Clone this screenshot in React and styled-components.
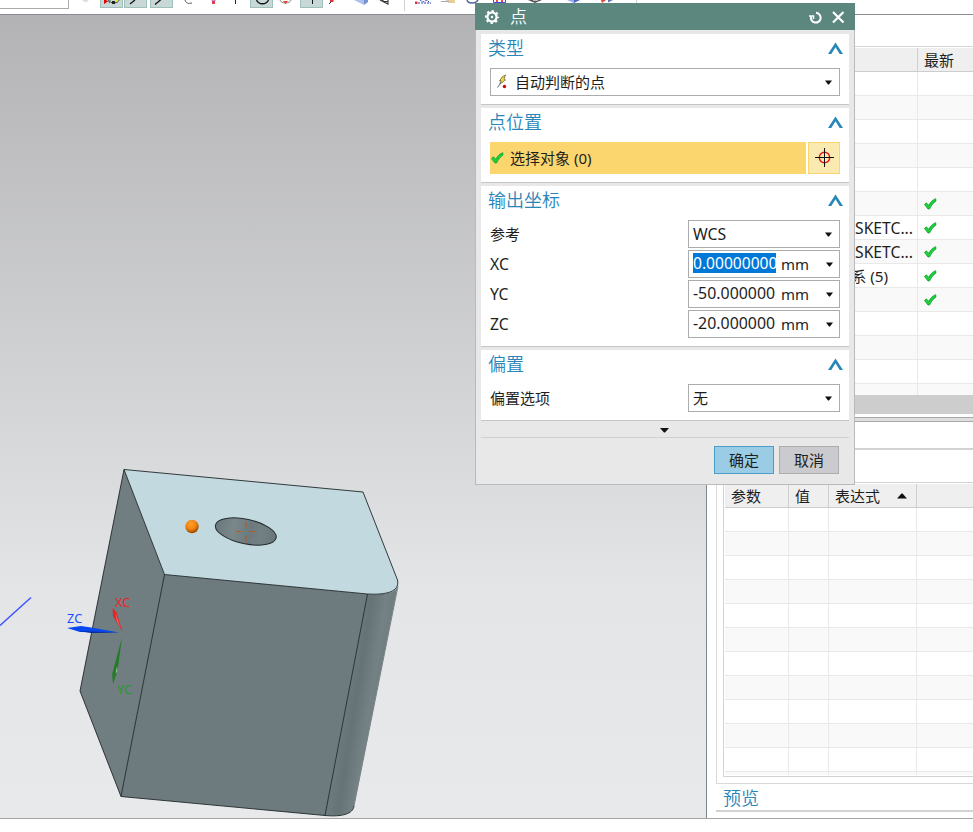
import React from 'react';
import styled, { createGlobalStyle } from 'styled-components';

const GlobalStyle = createGlobalStyle`
  * { box-sizing: border-box; }
  body { margin: 0; background: #fff; overflow: hidden; }
`;

const Window = styled.div`
  position: relative;
  display: flex;
  flex-direction: column;
  width: 973px;
  height: 832px;
  overflow: hidden;
  background: #fff;
  color: #1e1e1e;
  font: 15px/20px 'Noto Sans', 'Noto Sans CJK SC', sans-serif;
`;

/* Toolbar */
const Toolbar = styled.div`
  display: flex;
  align-items: flex-start;
  height: 15px;
  flex: none;
  border-bottom: 1px solid #868c90;
`;
const FilterBox = styled.div`
  width: 69px;
  height: 9px;
  margin-right: 6px;
  border: solid #acacac;
  border-width: 0 1px 1px 0;
`;
const Tool = styled.div`
  width: 23px;
  height: 8px;
  margin-right: ${(p) => p.$gap ?? 2}px;
  background: ${(p) => (p.$active ? '#c8d8d7' : 'transparent')};
  border: ${(p) => (p.$active ? '1px solid #9fbfba' : '1px solid transparent')};
  border-top: 0;
  overflow: hidden;
  svg { display: block; }
`;
const ToolDivider = styled.div`
  width: 1px;
  height: 11px;
  margin: 0 9px 0 3px;
  background: #d2d2d2;
`;

const toolIcons = [
  { d: <path d="M6 0h7l-3 2.500-2-1z" fill="#ddd" /> },
  { active: true, gap: 1, d: <><path d="M3 0v4l4-2.500-2-1.500z" fill="#e60000" /><path d="M7 0l2 3M9 0c-1 4 8 4 9 0" fill="none" stroke="#444" /><path d="M11 1h3v3h-3z" fill="#222" /><path d="M15 0h1.500v1.500H15z" fill="#ee0" /></> },
  { active: true, gap: 3, d: <path d="M5 4l5-4" stroke="#111" strokeWidth="1.300" /> },
  { active: true, d: <path d="M4 4.500l6-5" stroke="#111" strokeWidth="1.300" /> },
  { d: <path d="M9 0c1 3 3 4 7 3" fill="none" stroke="#555" /> },
  { d: <><path d="M10 0h5l-2 3z" fill="#c58bdd" /><path d="M11 1h3v3h-3z" fill="#d8404e" /></> },
  { d: <path d="M9.500 0v4" stroke="#222" /> },
  { active: true, d: <path d="M5.500 0c2 5 10 5 12 0" fill="none" stroke="#111" strokeWidth="1.300" /> },
  { d: <><path d="M4 0c1 4 10 4 11 0" fill="none" stroke="#888" /><path d="M7 1h5l-2.500 3z" fill="#e34234" /></> },
  { active: true, gap: 4, d: <path d="M11.500 0v4" stroke="#111" /> },
  { d: <><path d="M1 4l4-4" stroke="#333" /><path d="M2 0h3.500v2H2z" fill="#d33" /></> },
  { gap: 2, d: <><path d="M1 0l10 5V0z" fill="#a9c1ec" /><path d="M11 0v5l4-3V0z" fill="#7392cf" /></> },
  { gap: 1, d: <path d="M2 0l8 4V0M5 0v1.500h5" fill="none" stroke="#333" strokeWidth="1.100" /> },
];
const rightIcons = [
  { gap: 2, d: <><path d="M3 3h13M5 0l3 2 4-2 3 3" stroke="#3143a5" strokeDasharray="2 1" fill="none" /><path d="M0 1.500h2.500V4H0z" fill="#e03232" /></> },
  { gap: 2, d: <><path d="M5 0h10v3H9z" fill="#e6cf95" /><path d="M1 1h8v1H1z" fill="#9ca9c9" /></> },
  { gap: 2, d: <path d="M2 0c1 4 9 4 11 0" fill="none" stroke="#53659c" strokeWidth="1.500" /> },
  { gap: 12, d: <><path d="M3.500 0v2.500h12V0" fill="none" stroke="#4545e8" /><path d="M6 0h2v2H6zM11 0h2v2h-2z" fill="#f04b3a" /></> },
  { gap: 16, d: <><path d="M3 0h14l-7 3z" fill="#555" /><path d="M8 0h5v1H8z" fill="#bbb" /></> },
  { gap: 12, d: <><path d="M3 0l7 3V0z" fill="#99aaf0" /><path d="M10 0v3l6-3z" fill="#5167bd" /></> },
  { gap: 12, d: <><path d="M2 0h5L3 3z" fill="#e04734" /><path d="M9 0h5L9 2.500z" fill="#6272b1" /></> },
];

const renderTool = ({ active, gap, d }, i) => (
  <Tool key={i} $active={active} $gap={gap}>
    <svg width="21" height="7">{d}</svg>
  </Tool>
);

/* Main area */
const Workspace = styled.div`
  display: flex;
  height: 804px;
  flex: none;
  border-bottom: 1px solid #a4a4a4;
`;
const Viewport = styled.div`
  width: 706px;
  flex: none;
  background: linear-gradient(#b3b3b5 0%, #d9dadc 56%, #e4e5e7 72%, #e8e9eb 100%);
  svg { display: block; }
`;
const SidePanel = styled.div`
  flex: 1;
  display: flex;
  flex-direction: column;
  border-left: 1px solid #7f878c;
  background: #fff;
`;
const UpperGrid = styled.div`
  margin-top: 31px;
  height: 349px;
  padding-top: 1px;
  border-top: 1px solid #d4d4d4;
  overflow: hidden;
`;
const GridHead = styled.div`
  display: grid;
  grid-template-columns: ${(p) => p.$cols};
  height: 24px;
  background: #efefef;
  border-bottom: 1px solid #cdcdcd;
`;
const GridRow = styled.div`
  display: grid;
  grid-template-columns: ${(p) => p.$cols};
  height: 24px;
  background: ${(p) => (p.$alt ? '#f9f9f9' : '#fff')};
  border-bottom: 1px solid #e9e9e9;
`;
const Cell = styled.div`
  display: flex;
  align-items: center;
  min-width: 0;
  white-space: nowrap;
  padding-left: 6px;
  border-right: 1px solid ${(p) => (p.$head ? '#cfcfcf' : '#e9e9e9')};
  &:last-child { border-right: 0; }
`;
const NameCell = styled(Cell)`
  justify-content: ${(p) => (p.$short ? 'flex-start' : 'flex-end')};
  padding-left: ${(p) => (p.$short ? 144 : 0)}px;
  padding-right: 4px;
  font-size: ${(p) => (p.$short ? 15.3 : 15.7)}px;
`;
const HScroll = styled.div`
  height: 19px;
  background: #cdcdcd;
`;
const Splitter = styled.div`
  height: 5px;
  margin-top: 3px;
  background: #dedede;
  border: solid #a7a7a7;
  border-width: 1px 0;
`;
const TabStrip = styled.div`
  height: 28px;
  border-bottom: 2px solid #d2d2d2;
`;
const DetailFrame = styled.div`
  height: 334px;
  margin-left: 9px;
  padding: 32px 0 6px 6px;
  border: solid #d9d9d9;
  border-width: 0 0 1px 1px;
`;
const DetailGrid = styled.div`
  height: 295px;
  padding: 1px 0 1px 1px;
  border: 1px solid #d2d2d2;
  border-right: 0;
  overflow: hidden;
`;
const GridClip = styled.div`
  height: 291px;
  overflow: hidden;
`;
const PreviewTitle = styled.div`
  height: 28px;
  margin-left: 9px;
  padding-left: 7px;
  font-size: 18px;
  font-weight: 350;
  line-height: 29px;
  color: #2886b9;
  border-bottom: 2px solid #d2d2d2;
`;
const SortArrow = styled.svg`
  margin-left: 17px;
`;

/* Dialog */
const Dialog = styled.div`
  position: absolute;
  left: 475px;
  top: 3px;
  width: 380px;
  height: 482px;
  display: flex;
  flex-direction: column;
  background: #e8e8e8;
`;
const TitleBar = styled.div`
  height: 27px;
  flex: none;
  display: flex;
  align-items: center;
  padding: 1px 10px 0 9px;
  color: #fff;
  background: #5b877f;
  font-size: 17px;
  font-weight: 350;
`;
const TitleText = styled.span`
  flex: 1;
  margin-left: 10px;
  line-height: 26px;
`;
const CloseIcon = styled.svg`
  margin: 1px 0 0 10px;
`;
const DialogBody = styled.div`
  flex: 1;
  display: flex;
  flex-direction: column;
  gap: 3px;
  padding: 4px 5px 0;
  border: 1px solid #b8babb;
  border-top: 0;
`;
const SectionBox = styled.section`
  padding: 0 9px 8px;
  background: #fff;
  border-bottom: 1px solid #c6c6c6;
`;
const SectionHead = styled.div`
  display: flex;
  align-items: center;
  justify-content: space-between;
  height: 28px;
  margin: 0 -4px 6px -2px;
  font-size: 18px;
  font-weight: 350;
  color: #2886b9;
`;
const Fields = styled.div`
  display: flex;
  flex-direction: column;
  gap: 2px;
`;
const Field = styled.div`
  display: flex;
  align-items: center;
  justify-content: space-between;
  height: 28px;
`;
const AxisLabel = styled.span`
  font-size: 15.7px;
`;
const Combo = styled.div`
  display: flex;
  align-items: center;
  width: ${(p) => p.$width ?? 152}px;
  height: 28px;
  padding: 0 ${(p) => (p.$numeric ? 5 : 6)}px 0 4px;
  border: 1px solid #acacac;
  background: #fff;
`;
const ComboText = styled.span`
  flex: 1;
  font-size: ${(p) => p.$size ?? 15}px;
`;
const TypeText = styled(ComboText)`
  margin-left: 6px;
`;
const NumberText = styled.span`
  width: 83px;
  height: 20px;
  margin-top: -2px;
  white-space: nowrap;
  font-size: ${(p) => (p.$selected ? 15.6 : 15.9)}px;
  color: ${(p) => (p.$selected ? '#fff' : '#1e1e1e')};
  background: ${(p) => (p.$selected ? '#0078d7' : 'transparent')};
`;
const Unit = styled.span`
  flex: 1;
  margin-left: 5px;
`;
const SelectionRow = styled.div`
  display: flex;
  gap: 2px;
  height: 32px;
`;
const SelectionBar = styled.div`
  flex: 1;
  display: flex;
  align-items: center;
  gap: 6px;
  padding-left: 1px;
  background: #fbd56d;
`;
const PointButton = styled.button`
  display: flex;
  align-items: center;
  justify-content: center;
  width: 32px;
  padding: 0;
  border: 1px solid #fbd56d;
  background: #faeab0;
`;
const Expander = styled.div`
  display: flex;
  justify-content: center;
  align-items: center;
  height: 14px;
  padding: 0 2px 0 0;
  border-bottom: 1px solid #d0d0d0;
`;
const Actions = styled.div`
  display: flex;
  justify-content: flex-end;
  gap: 5px;
  padding: 5px 10px 0 0;
`;
const ActionButton = styled.button`
  width: 60px;
  height: 28px;
  padding: 0;
  font: inherit;
  color: #1e1e1e;
  border: 1px solid ${(p) => (p.$primary ? '#489fcd' : '#acacac')};
  background: ${(p) => (p.$primary ? '#9acce5' : '#cbcbcf')};
`;

const Triangle = ({ small }) => (
  <svg width="9" height="5">
    <path d={small ? 'M1 .5h7L5 4.500H4z' : 'M0 0h9L5 4.500H4z'} fill="#111" />
  </svg>
);
const Chevron = () => (
  <svg width="16" height="12"><path d="M0 12L7.500 .5 15 12h-3.300L7.500 5.200 3.300 12z" fill="#2886b9" /></svg>
);
const Check = () => (
  <svg width="13" height="12">
    <path d="M.5 6.500L2.300 4.800 4.800 7.300C6.500 4 8.500 2 11.700.7L12 3C9.500 4.500 7.300 7.500 5.500 11H4z" fill="#1bd23c" stroke="#119d28" strokeWidth=".8" />
  </svg>
);
const Gear = () => (
  <svg width="16" height="16" viewBox="-8 -8 16 16" fill="none" stroke="#fff">
    <circle r="4.600" strokeWidth="2.200" />
    <circle r="6.100" strokeWidth="2" strokeDasharray="2.200 2.591" strokeDashoffset="1.100" />
    <circle r="1.200" fill="#fff" stroke="none" />
  </svg>
);
const Section = ({ title, children }) => (
  <SectionBox>
    <SectionHead>{title}<Chevron /></SectionHead>
    <Fields>{children}</Fields>
  </SectionBox>
);
const NumberField = ({ label, value, selected }) => (
  <Field>
    <AxisLabel>{label}</AxisLabel>
    <Combo $numeric>
      <NumberText $selected={selected}>{value}</NumberText>
      <Unit>mm</Unit>
      <Triangle small />
    </Combo>
  </Field>
);

const Model = () => (
  <svg width="706" height="803" viewBox="0 15 706 803" fontFamily="'Noto Sans', sans-serif">
    <defs>
      <linearGradient id="fillet" gradientUnits="userSpaceOnUse" x1="346" y1="700" x2="378" y2="705">
        <stop offset="0" stopColor="#6d7a7d" />
        <stop offset=".3" stopColor="#667376" />
        <stop offset=".75" stopColor="#748185" />
        <stop offset="1" stopColor="#6f7c80" />
      </linearGradient>
      <linearGradient id="bore">
        <stop offset="0" stopColor="#6b787b" />
        <stop offset=".3" stopColor="#7a878b" />
        <stop offset=".55" stopColor="#6c797d" />
        <stop offset=".75" stopColor="#727f83" />
        <stop offset="1" stopColor="#69767a" />
      </linearGradient>
      <radialGradient id="ball" cx=".42" cy=".32" r=".65">
        <stop offset="0" stopColor="#ffa22b" />
        <stop offset=".6" stopColor="#f0820f" />
        <stop offset="1" stopColor="#a04c02" />
      </radialGradient>
    </defs>
    <path d="M0 625.500L31 597.500" stroke="#3c55ff" strokeWidth="1.500" />
    <path d="M124 469.500L164.500 574.500 121 796.500 80 691z" fill="#707e81" />
    <path d="M164.500 574.500L367.500 594 325 815.500 121 796.500z" fill="#6e7b7e" />
    <path d="M367.500 594C384 595 397 593 398 585L354 806C353 814 342 817 325 815.500z" fill="url(#fillet)" />
    <path d="M124 469.500L363 492 397.500 580C400 592 386 595 367.500 594L164.500 574.500z" fill="#c2d9df" />
    <path d="M124 469.500L363 492 397.500 580C400 592 386 595 367.500 594L164.500 574.500zM124 469.500L80 691 121 796.500 325 815.500C342 817 353 814 354 806M164.500 574.500L121 796.500M367.500 594L325 815.500" fill="none" stroke="#1f2729" strokeWidth=".9" />
    <path d="M398 586L354 806" stroke="#788487" />
    <ellipse cx="245.800" cy="531.500" rx="31" ry="12.300" transform="rotate(12 245.800 531.500)" fill="url(#bore)" stroke="#252d2f" />
    <path d="M246 522.500v5M246 536v5M236 531.500h5M250 531.500h5" stroke="#b35d1c" strokeWidth="1.200" />
    <circle cx="192" cy="526.500" r="6.700" fill="url(#ball)" />
    <path d="M67 628l14-2 10 1.500 28 5-39-.5z" fill="#0647ef" />
    <path d="M78 631l41 1.500-28 .5z" fill="#082a95" />
    <path d="M112.500 608l4 4 6 20-9.500-16z" fill="#df2528" />
    <path d="M115 612l6 17-4-8z" fill="#f07977" />
    <path d="M122 637.500L117.500 671l-4.500 13-.8-10z" fill="#237b25" />
    <path d="M117 666l.5 5-2 3z" fill="#9ac69b" />
    <g fontSize="12.700">
      <text x="67" y="622.500" fill="#244aff">ZC</text>
      <text x="115" y="607" fill="#ed2526">XC</text>
      <text x="117" y="694" fill="#279a2a">YC</text>
    </g>
  </svg>
);

const upperCols = '211px 1fr';
const features = [
  {}, {}, {}, {}, {},
  { ok: true },
  { name: 'SKETC...', ok: true },
  { name: 'SKETC...', ok: true },
  { name: '系 (5)', short: true, ok: true },
  { ok: true },
  {}, {}, {}, {},
];
const detailCols = '64px 40px 88px 1fr';

export default function App() {
  return (
    <Window>
      <GlobalStyle />
      <Toolbar>
        <FilterBox />
        {toolIcons.map(renderTool)}
        <ToolDivider />
        {rightIcons.map(renderTool)}
        <ToolDivider />
      </Toolbar>
      <Workspace>
        <Viewport><Model /></Viewport>
        <SidePanel>
          <UpperGrid>
            <GridHead $cols={upperCols}>
              <Cell $head />
              <Cell $head>最新</Cell>
            </GridHead>
            {features.map((f, i) => (
              <GridRow key={i} $cols={upperCols} $alt={i % 2 === 1}>
                <NameCell $short={f.short}>{f.name}</NameCell>
                <Cell>{f.ok && <Check />}</Cell>
              </GridRow>
            ))}
          </UpperGrid>
          <HScroll />
          <Splitter />
          <TabStrip />
          <DetailFrame>
            <DetailGrid>
              <GridClip>
                <GridHead $cols={detailCols}>
                  <Cell $head>参数</Cell>
                  <Cell $head>值</Cell>
                  <Cell $head>
                    表达式
                    <SortArrow width="10" height="6"><path d="M0 5.500h10L5.500 .5h-1z" fill="#111" /></SortArrow>
                  </Cell>
                  <Cell $head />
                </GridHead>
                {Array.from({ length: 12 }, (_, i) => (
                  <GridRow key={i} $cols={detailCols} $alt={i % 2 === 1}>
                    <Cell /><Cell /><Cell /><Cell />
                  </GridRow>
                ))}
              </GridClip>
            </DetailGrid>
          </DetailFrame>
          <PreviewTitle>预览</PreviewTitle>
        </SidePanel>
      </Workspace>

      <Dialog>
        <TitleBar>
          <Gear />
          <TitleText>点</TitleText>
          <svg width="13" height="13" fill="none" stroke="#fff" strokeWidth="2">
            <path d="M7 1.800A4.900 4.900 0 1 1 2 5.500" />
            <path d="M0 5h4.500v3" strokeWidth="1.500" />
          </svg>
          <CloseIcon width="13" height="13"><path d="M1 1l10.500 10.500M11.500 1L1 11.500" stroke="#fff" strokeWidth="2.200" /></CloseIcon>
        </TitleBar>
        <DialogBody>
          <Section title="类型">
            <Combo $width={350}>
              <svg width="14" height="16">
                <path d="M7 3l3.500-2-1.500 4 1.500 1-5.500 4 1-3.500-1.500.5z" fill="#f4d742" stroke="#5c5530" strokeWidth=".7" />
                <path d="M6 8.500l-3.500 5" stroke="#666" />
                <circle cx="9.500" cy="12.500" r="1.700" fill="#d5000b" />
              </svg>
              <TypeText>自动判断的点</TypeText>
              <Triangle small />
            </Combo>
          </Section>
          <Section title="点位置">
            <SelectionRow>
              <SelectionBar><Check />选择对象 (0)</SelectionBar>
              <PointButton aria-label="point">
                <svg width="20" height="20" fill="none">
                  <circle cx="10.500" cy="9.500" r="5.200" stroke="#e5131d" strokeWidth="1.400" />
                  <path d="M10.500 0v19M1 9.500h19" stroke="#111" />
                </svg>
              </PointButton>
            </SelectionRow>
          </Section>
          <Section title="输出坐标">
            <Field>参考<Combo><ComboText $size={15.8}>WCS</ComboText><Triangle small /></Combo></Field>
            <NumberField label="XC" value="0.00000000" selected />
            <NumberField label="YC" value="-50.000000" />
            <NumberField label="ZC" value="-20.000000" />
          </Section>
          <Section title="偏置">
            <Field>偏置选项<Combo><ComboText>无</ComboText><Triangle small /></Combo></Field>
          </Section>
          <Expander><Triangle /></Expander>
          <Actions>
            <ActionButton $primary>确定</ActionButton>
            <ActionButton>取消</ActionButton>
          </Actions>
        </DialogBody>
      </Dialog>
    </Window>
  );
}
